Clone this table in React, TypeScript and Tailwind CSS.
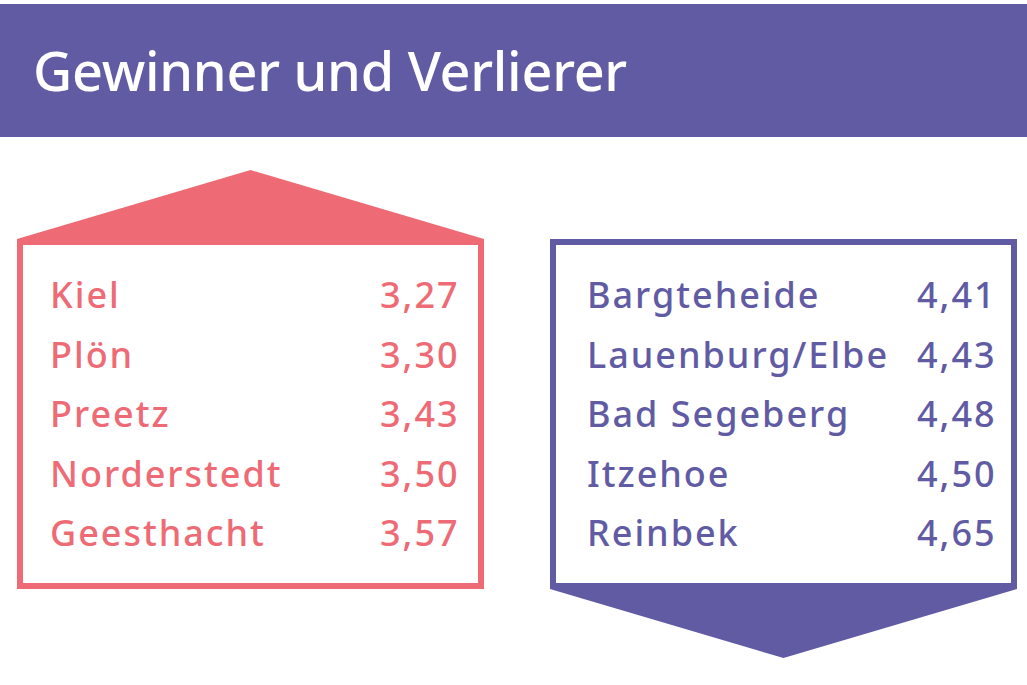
const winners = [
  { name: "Kiel", value: "3,27" },
  { name: "Plön", value: "3,30" },
  { name: "Preetz", value: "3,43" },
  { name: "Norderstedt", value: "3,50" },
  { name: "Geesthacht", value: "3,57" },
]

const losers = [
  { name: "Bargteheide", value: "4,41" },
  { name: "Lauenburg/Elbe", value: "4,43" },
  { name: "Bad Segeberg", value: "4,48" },
  { name: "Itzehoe", value: "4,50" },
  { name: "Reinbek", value: "4,65" },
]

function RankList({ rows }: { rows: { name: string; value: string }[] }) {
  return (
    <div className="grid grid-cols-[330px_auto] text-[36px] leading-[59.5px] font-medium tracking-[0.055em]">
      {rows.map((row) => (
        <div key={row.name} className="contents">
          <span>{row.name}</span>
          <span>{row.value}</span>
        </div>
      ))}
    </div>
  )
}

export default function App() {
  return (
    <div className="h-[685px] w-[1027px] overflow-hidden bg-white pt-1 font-['Noto_Sans','Open_Sans',sans-serif]">
      {/* header */}
      <div className="flex h-[133px] items-center bg-[#615ba4] pl-[33px]">
        <h1 className="text-[54px] font-medium tracking-[-0.005em] text-white">Gewinner und Verlierer</h1>
      </div>

      <div className="mt-[33px] flex gap-[66px] pl-[17px]">
        {/* winners: arrow up */}
        <div className="flex w-[467px] flex-col">
          <svg width="467" height="69" viewBox="0 0 467 69" className="block">
            <polygon points="0,69 233.5,0 467,69" fill="#ee6b76" />
          </svg>
          <div className="h-[350px] border-[6px] border-[#ee6b76] py-[20px] pl-[27px] text-[#ee6b76]">
            <RankList rows={winners} />
          </div>
        </div>

        {/* losers: arrow down */}
        <div className="flex w-[467px] flex-col pt-[69px]">
          <div className="h-[350px] border-[6px] border-[#615ba4] py-[20px] pl-[31px] text-[#615ba4]">
            <RankList rows={losers} />
          </div>
          <svg width="467" height="69" viewBox="0 0 467 69" className="block">
            <polygon points="0,0 467,0 233.5,69" fill="#615ba4" />
          </svg>
        </div>
      </div>
    </div>
  )
}
